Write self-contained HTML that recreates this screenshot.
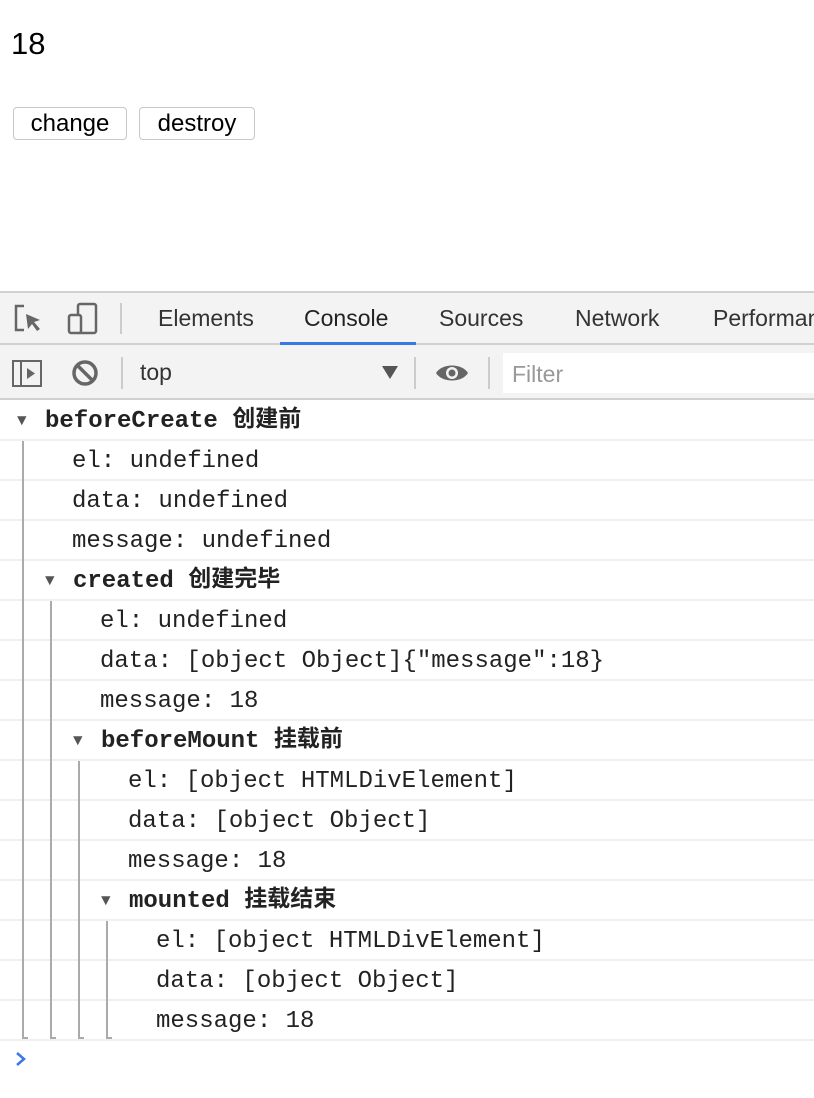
<!DOCTYPE html>
<html><head><meta charset="utf-8"><style>
body{margin:0;width:814px;height:1098px;overflow:hidden;background:#fff;font-family:"Liberation Sans","Noto Sans CJK SC",sans-serif;position:relative}
.abs{position:absolute}
.btn{position:absolute;top:107px;height:33px;border:1px solid #c8c8c8;border-radius:4px;background:#fff;font-size:24px;line-height:32px;text-align:center;box-sizing:border-box;color:#000}
.bar1{position:absolute;left:0;top:291px;width:814px;height:54px;background:#f3f3f3;border-top:2px solid #d0d0d0;border-bottom:2px solid #d0d0d0;box-sizing:border-box}
.bar2{position:absolute;left:0;top:345px;width:814px;height:55px;background:#f3f3f3;border-bottom:2px solid #d0d0d0;box-sizing:border-box}
.tab{position:absolute;top:305px;font-size:23px;color:#333}
.row{position:absolute;left:0;width:814px;height:40px;border-bottom:2px solid #f0f0f0;box-sizing:border-box;font-family:"Liberation Mono","Noto Sans CJK SC",monospace;font-size:24px;line-height:42px;color:#222;white-space:pre}
.row b{font-weight:bold}
.row .c{font-family:"Noto Sans CJK SC",sans-serif;font-weight:bold;font-size:23px;line-height:0;vertical-align:1px}
.tri{position:absolute;font-size:16px;color:#555;top:0;line-height:40px}
.vl{position:absolute;width:2px;background:#aaa;bottom:59px}
.vl:after{content:"";position:absolute;left:0;bottom:0;width:6px;height:2px;background:#aaa}
</style></head><body>
<div class="abs" style="left:11px;top:26px;font-size:31px;color:#000">18</div>
<div class="btn" style="left:13px;width:114px">change</div>
<div class="btn" style="left:139px;width:116px">destroy</div>

<div class="bar1"></div>
<svg class="abs" style="left:14px;top:304px" width="32" height="30" viewBox="0 0 32 30"><path d="M10 2H2v24h8" fill="none" stroke="#666" stroke-width="2.5"/><path d="M12 10l14 6-6 2 6 7-3 2-5-7-4 5z" fill="#666"/></svg>
<svg class="abs" style="left:66px;top:302px" width="34" height="34" viewBox="0 0 34 34"><rect x="12" y="2" width="18" height="29" rx="2" fill="none" stroke="#666" stroke-width="2.5"/><rect x="3" y="13" width="12" height="18" rx="2" fill="#f3f3f3" stroke="#666" stroke-width="2.5"/></svg>
<div class="abs" style="left:120px;top:303px;width:2px;height:31px;background:#ccc"></div>
<div class="tab" style="left:158px">Elements</div>
<div class="tab" style="left:304px;color:#222">Console</div>
<div class="abs" style="left:280px;top:342px;width:136px;height:3px;background:#3b78e7"></div>
<div class="tab" style="left:439px">Sources</div>
<div class="tab" style="left:575px">Network</div>
<div class="tab" style="left:713px">Performance</div>

<div class="bar2"></div>
<svg class="abs" style="left:12px;top:360px" width="32" height="28" viewBox="0 0 32 28"><rect x="1" y="1" width="28" height="25" fill="none" stroke="#666" stroke-width="2"/><line x1="9" y1="1" x2="9" y2="26" stroke="#666" stroke-width="2"/><path d="M15 8l8 5.5-8 5.5z" fill="#666"/></svg>
<svg class="abs" style="left:71px;top:359px" width="28" height="28" viewBox="0 0 28 28"><circle cx="14" cy="14" r="11" fill="none" stroke="#666" stroke-width="3.5"/><line x1="6" y1="6" x2="22" y2="22" stroke="#666" stroke-width="3.5"/></svg>
<div class="abs" style="left:121px;top:357px;width:2px;height:32px;background:#ccc"></div>
<div class="abs" style="left:140px;top:359px;font-size:23px;color:#333">top</div>
<svg class="abs" style="left:382px;top:366px" width="16" height="14"><path d="M0 0h16L8 13z" fill="#555"/></svg>
<div class="abs" style="left:414px;top:357px;width:2px;height:32px;background:#ccc"></div>
<svg class="abs" style="left:435px;top:361px" width="34" height="24" viewBox="0 0 34 24"><path d="M1 12C7 2 27 2 33 12 27 22 7 22 1 12z" fill="#666"/><circle cx="17" cy="12" r="6" fill="#f3f3f3"/><circle cx="17" cy="12" r="3.5" fill="#666"/></svg>
<div class="abs" style="left:488px;top:357px;width:2px;height:32px;background:#ccc"></div>
<div class="abs" style="left:503px;top:353px;width:311px;height:40px;background:#fff"></div>
<div class="abs" style="left:512px;top:361px;font-size:23px;color:#999">Filter</div>

<div class="row" style="top:401px"><span class="tri" style="left:17px">▼</span><span style="position:absolute;left:45px"><b>beforeCreate</b> <span class="c">创建前</span></span></div>
<div class="row" style="top:441px"><span style="position:absolute;left:72px">el: undefined</span></div>
<div class="row" style="top:481px"><span style="position:absolute;left:72px">data: undefined</span></div>
<div class="row" style="top:521px"><span style="position:absolute;left:72px">message: undefined</span></div>
<div class="row" style="top:561px"><span class="tri" style="left:45px">▼</span><span style="position:absolute;left:73px"><b>created</b> <span class="c">创建完毕</span></span></div>
<div class="row" style="top:601px"><span style="position:absolute;left:100px">el: undefined</span></div>
<div class="row" style="top:641px"><span style="position:absolute;left:100px">data: [object Object]{"message":18}</span></div>
<div class="row" style="top:681px"><span style="position:absolute;left:100px">message: 18</span></div>
<div class="row" style="top:721px"><span class="tri" style="left:73px">▼</span><span style="position:absolute;left:101px"><b>beforeMount</b> <span class="c">挂载前</span></span></div>
<div class="row" style="top:761px"><span style="position:absolute;left:128px">el: [object HTMLDivElement]</span></div>
<div class="row" style="top:801px"><span style="position:absolute;left:128px">data: [object Object]</span></div>
<div class="row" style="top:841px"><span style="position:absolute;left:128px">message: 18</span></div>
<div class="row" style="top:881px"><span class="tri" style="left:101px">▼</span><span style="position:absolute;left:129px"><b>mounted</b> <span class="c">挂载结束</span></span></div>
<div class="row" style="top:921px"><span style="position:absolute;left:156px">el: [object HTMLDivElement]</span></div>
<div class="row" style="top:961px"><span style="position:absolute;left:156px">data: [object Object]</span></div>
<div class="row" style="top:1001px"><span style="position:absolute;left:156px">message: 18</span></div>

<div class="vl" style="left:22px;top:441px;height:598px"></div>
<div class="vl" style="left:50px;top:601px;height:438px"></div>
<div class="vl" style="left:78px;top:761px;height:278px"></div>
<div class="vl" style="left:106px;top:921px;height:118px"></div>

<svg class="abs" style="left:15px;top:1051px" width="12" height="16"><path d="M2 2l7 6-7 6" fill="none" stroke="#3b78e7" stroke-width="2.5"/></svg>
</body></html>
